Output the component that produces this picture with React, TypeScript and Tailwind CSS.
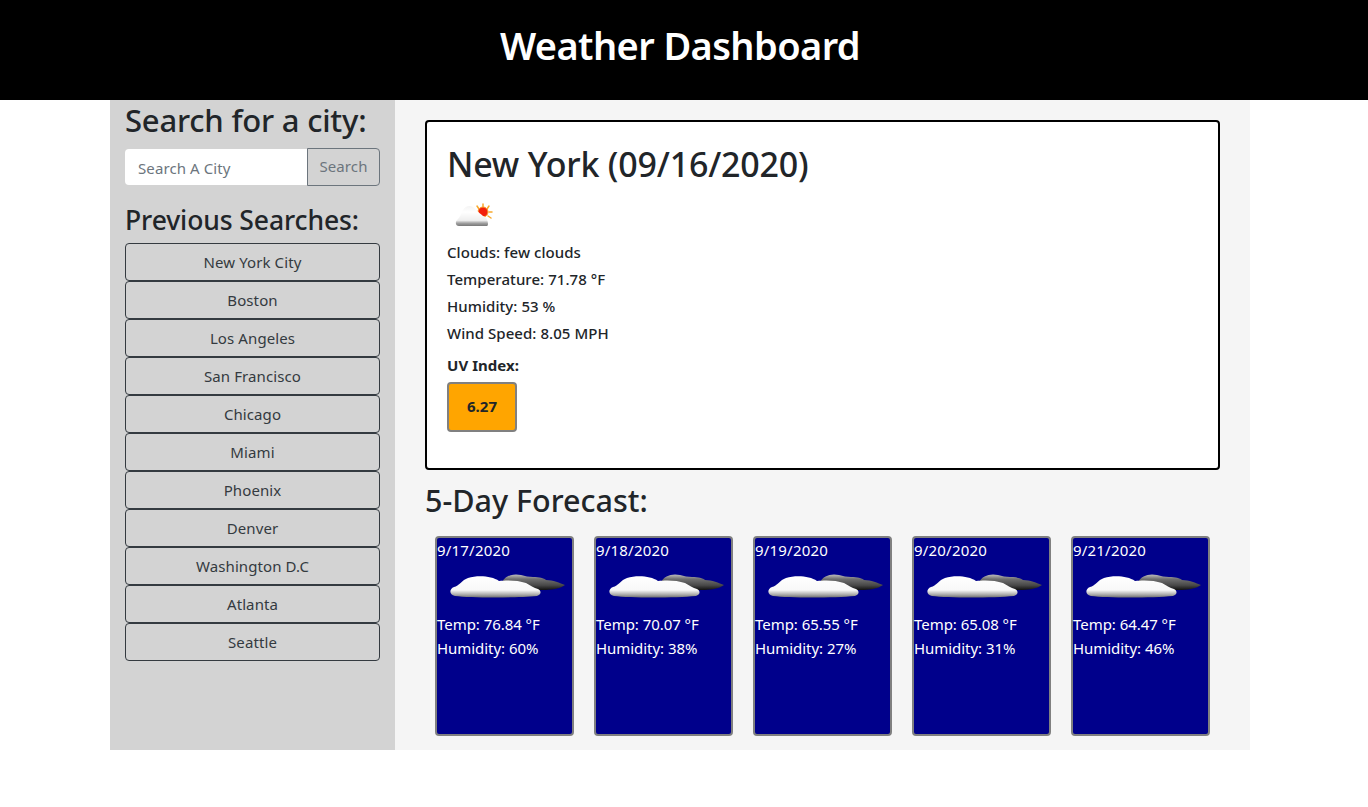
import React from 'react';

const cities = ['New York City', 'Boston', 'Los Angeles', 'San Francisco', 'Chicago', 'Miami', 'Phoenix', 'Denver', 'Washington D.C', 'Atlanta', 'Seattle'];

const forecast = [
  { date: '9/17/2020', temp: '76.84', humidity: '60' },
  { date: '9/18/2020', temp: '70.07', humidity: '38' },
  { date: '9/19/2020', temp: '65.55', humidity: '27' },
  { date: '9/20/2020', temp: '65.08', humidity: '31' },
  { date: '9/21/2020', temp: '64.47', humidity: '46' },
];

function ScatteredIcon() {
  return (
    <svg width="48" height="32" viewBox="0 0 48 32" className="block">
      <defs>
        <linearGradient id="smallCloud" x1="0" y1="0" x2="0" y2="1">
          <stop offset="0" stopColor="#f4f4f4" />
          <stop offset="0.3" stopColor="#ffffff" />
          <stop offset="0.72" stopColor="#eeeeee" />
          <stop offset="0.86" stopColor="#a0a0a0" />
          <stop offset="1" stopColor="#777777" />
        </linearGradient>
      </defs>
      <g stroke="#f8a92c" strokeWidth="1.5" strokeLinecap="round">
        <path d="M33 6v3M27 8l2 3M39 8l-2 3M42 14h-3M41 20l-3-2M35 22l-1-3" />
      </g>
      <circle cx="33" cy="14" r="5" fill="#f2200c" stroke="#f9a030" />
      <path
        d="M9 28 C5 28 5 23 8 21 C10 19 11 16 13 12 C16 7 22 7 25 11 C28 14 31 16 33 18 C37 19 38 24 38 26 C38 28 37 28 36 28 Z"
        fill="url(#smallCloud)"
      />
    </svg>
  );
}

function CloudsIcon({ id }: { id: string }) {
  return (
    <svg width="124" height="34" viewBox="0 0 124 34" className="block blur-[0.4px]">
      <defs>
        <linearGradient id={`${id}-w`} x1="0" y1="0" x2="0" y2="1">
          <stop offset="0" stopColor="#ffffff" />
          <stop offset="0.65" stopColor="#f8f8f8" />
          <stop offset="0.85" stopColor="#b0b0b0" />
          <stop offset="1" stopColor="#707070" />
        </linearGradient>
        <linearGradient id={`${id}-d`} x1="0" y1="0" x2="0" y2="1">
          <stop offset="0" stopColor="#c0c0c0" />
          <stop offset="0.3" stopColor="#707070" />
          <stop offset="0.7" stopColor="#484848" />
          <stop offset="1" stopColor="#111111" />
        </linearGradient>
      </defs>
      <path
        d="M56 14 C59 8 67 5 75 7 C79 8 83 9 87 9 C93 9 98 10 100 12 C107 12 114 15 119 17 C114 21 105 22 97 22 L62 22 Z"
        fill={`url(#${id}-d)`}
      />
      <path
        d="M9 28 C3 27 3 21 8 19 C13 18 16 12 22 10 C32 7 46 8 53 13 C60 12 72 12 80 15 C84 17 88 20 92 21 C96 23 95 27 91 28 C70 30 25 30 9 28 Z"
        fill={`url(#${id}-w)`}
      />
    </svg>
  );
}

export default function App() {
  return (
    <div className="min-h-[807px] bg-white font-['Noto_Sans',sans-serif] text-[#212529]">
      <header className="h-[100px] bg-black flex items-center justify-center pb-[11px] pr-2">
        <h1 className="text-white text-[38px] font-semibold leading-none tracking-[-0.6px]">Weather Dashboard</h1>
      </header>

      <div className="w-[1140px] h-[650px] ml-[110px] flex">
        <aside className="w-[285px] bg-[#d3d3d3] px-[15px]">
          <h3 className="text-[31px] font-medium leading-[40px] tracking-[-0.2px]">Search for a city:</h3>
          <div className="flex mt-[8px] h-[38px]">
            <div className="w-[182px] my-px bg-white rounded-l pl-[13px] pt-[3px] flex items-center text-[15px] text-[#6c757d] tracking-[0.1px]">Search A City</div>
            <button className="w-[73px] border border-[#6c757d] rounded-r text-[15px] text-[#6c757d] pb-px tracking-[0.1px]">Search</button>
          </div>
          <h3 className="text-[26.5px] font-medium leading-[36px] mt-[16px] mb-[5px] tracking-[-0.1px]">Previous Searches:</h3>
          <div className="flex flex-col">
            {cities.map((city) => (
              <button key={city} className="h-[38px] border border-[#343a40] rounded text-[15px] text-[#343a40] tracking-[0.1px]">
                {city}
              </button>
            ))}
          </div>
        </aside>

        <main className="flex-1 bg-[#f5f5f5] px-[30px] pt-[20px]">
          <section className="h-[350px] bg-white border-2 border-black rounded px-5 pt-[20px]">
            <h2 className="text-[34px] font-medium leading-[45px] tracking-[-0.2px]">New York (09/16/2020)</h2>
            <div className="h-[52px] pt-[11px] pl-[3px]">
              <ScatteredIcon />
            </div>
            <div className="text-[15px] font-medium leading-[27px] tracking-[0.05px]">
              <p>Clouds: few clouds</p>
              <p>Temperature: 71.78 °F</p>
              <p>Humidity: 53 %</p>
              <p>Wind Speed: 8.05 MPH</p>
            </div>
            <p className="mt-[6px] text-[15px] font-bold leading-[24px] tracking-[0.05px]">UV Index:</p>
            <div className="mt-[5px] w-[70px] h-[50px] bg-[#ffa500] border-2 border-[#808080] rounded flex items-center justify-center text-[15px] font-bold pb-px">
              6.27
            </div>
          </section>

          <h3 className="text-[30.5px] font-medium leading-[40px] mt-[10px]">5-Day Forecast:</h3>

          <div className="flex justify-between px-[10px] mt-[16px]">
            {forecast.map((day, i) => (
              <div key={day.date} className="w-[139px] h-[200px] bg-[#00008b] border-2 border-[#808080] rounded text-white text-[15px] leading-[24px] tracking-[-0.05px]">
                <p className="tracking-[0.2px]">{day.date}</p>
                <div className="h-[50px] pt-[6px] pl-[9px]">
                  <CloudsIcon id={`cloud-${i}`} />
                </div>
                <p>Temp: {day.temp} °F</p>
                <p>Humidity: {day.humidity}%</p>
              </div>
            ))}
          </div>
        </main>
      </div>
    </div>
  );
}
